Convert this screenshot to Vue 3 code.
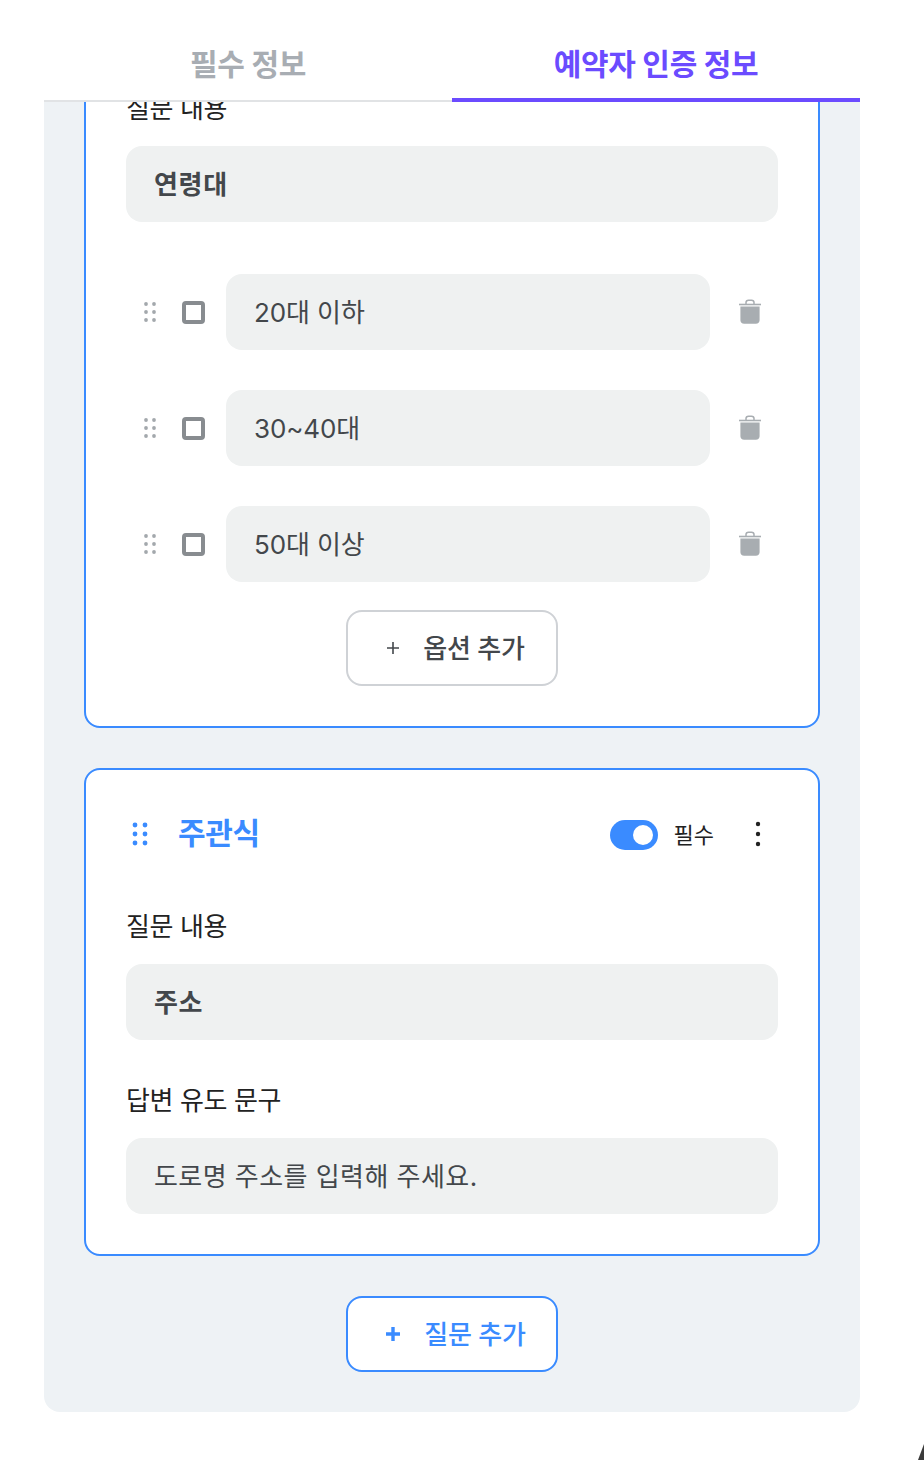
<script setup>
const options = ['20대 이하', '30~40대', '50대 이상']
const dots = [[3, 2], [11, 2], [3, 10], [11, 10], [3, 18], [11, 18]]
</script>

<template>
  <div class="page">
    <div class="shell">
      <nav class="tabs">
        <div class="tab">필수 정보</div>
        <div class="tab active">예약자 인증 정보</div>
      </nav>
      <main class="panel">
        <section class="card first">
          <div class="label">질문 내용</div>
          <div class="field strong">연령대</div>
          <div class="options">
            <div v-for="opt in options" :key="opt" class="option">
              <svg class="grip" width="14" height="20" viewBox="0 0 14 20">
                <circle v-for="(d, i) in dots" :key="i" :cx="d[0]" :cy="d[1]" r="1.9" fill="#a3a8ac" />
              </svg>
              <span class="check"></span>
              <div class="field opt">{{ opt }}</div>
              <svg class="trash" width="24" height="26" viewBox="0 0 24 26">
                <path d="M1 5.5h22" stroke="#a8adb1" stroke-width="1.6" fill="none" />
                <path d="M8 5V3.5C8 2 9 1.2 10.5 1.2h3C15 1.2 16 2 16 3.5V5" stroke="#a8adb1" stroke-width="1.5" fill="none" />
                <path d="M2.4 7.5h19.2V21c0 2.4-1.4 3.8-3.8 3.8H6.2c-2.4 0-3.8-1.4-3.8-3.8z" fill="#a8adb1" />
              </svg>
            </div>
          </div>
          <button class="add">
            <svg width="14" height="14" viewBox="0 0 14 14"><path d="M7 1v12M1 7h12" stroke="#43474b" stroke-width="1.6" /></svg>
            <span>옵션 추가</span>
          </button>
        </section>

        <section class="card">
          <header class="head">
            <svg class="grip-blue" width="16" height="24" viewBox="0 0 16 24">
              <circle cx="3" cy="3" r="2.4" fill="#3a8bff" />
              <circle cx="13" cy="3" r="2.4" fill="#3a8bff" />
              <circle cx="3" cy="12" r="2.4" fill="#3a8bff" />
              <circle cx="13" cy="12" r="2.4" fill="#3a8bff" />
              <circle cx="3" cy="21" r="2.4" fill="#3a8bff" />
              <circle cx="13" cy="21" r="2.4" fill="#3a8bff" />
            </svg>
            <h2 class="kind">주관식</h2>
            <span class="toggle"><i></i></span>
            <span class="req">필수</span>
            <svg class="more" width="6" height="26" viewBox="0 0 6 26">
              <circle cx="3" cy="3" r="2.2" fill="#222" />
              <circle cx="3" cy="13" r="2.2" fill="#222" />
              <circle cx="3" cy="23" r="2.2" fill="#222" />
            </svg>
          </header>
          <div class="label top">질문 내용</div>
          <div class="field strong">주소</div>
          <div class="label next">답변 유도 문구</div>
          <div class="field hint">도로명 주소를 입력해 주세요.</div>
        </section>

        <button class="add blue">
          <svg width="16" height="16" viewBox="0 0 16 16"><path d="M8 1v14M1 8h14" stroke="#3a8bff" stroke-width="3.4" /></svg>
          <span>질문 추가</span>
        </button>
      </main>
    </div>
    <svg class="cursor" width="6" height="16" viewBox="0 0 6 16"><path d="M6 0V16H0z" fill="#3a3a3a" /></svg>
  </div>
</template>

<style>
html, body { margin: 0; background: #fff; }
</style>

<style scoped>
.page {
  position: relative;
  width: 924px;
  height: 1460px;
  overflow: hidden;
  background: #fff;
  font-family: Inter, "Noto Sans CJK KR", sans-serif;
  color: #43474b;
}
.shell {
  width: 816px;
  margin-left: 44px;
  padding-top: 26px;
}
.tabs {
  display: flex;
  height: 76px;
  box-sizing: border-box;
  position: relative;
  z-index: 1;
  background: #fff;
  border-bottom: 2px solid #e1e3e5;
}
.tab {
  flex: 1;
  height: 76px;
  box-sizing: border-box;
  text-align: center;
  font-size: 30px;
  line-height: 76px;
  font-weight: 700;
  letter-spacing: -0.3px;
  color: #a8adb3;
}
.tab.active {
  color: #6b4bff;
  border-bottom: 4px solid #6b4bff;
}
.panel {
  display: flex;
  flex-direction: column;
  align-items: center;
  height: 1310px;
  box-sizing: border-box;
  padding: 0 40px 40px;
  overflow: hidden;
  background: #eef2f5;
  border-radius: 0 0 16px 16px;
}
.card {
  width: 100%;
  box-sizing: border-box;
  flex: none;
  padding: 40px;
  background: #fff;
  border: 2px solid #3a8bff;
  border-radius: 16px;
  margin-bottom: 40px;
}
.card.first {
  margin-top: -152px;
  padding-top: 138px;
}
.label {
  font-size: 26px;
  line-height: 38px;
  height: 36px;
  margin-bottom: 20px;
  color: #222;
  letter-spacing: -0.4px;
}
.label.top { margin-top: 50px; }
.label.next { margin-top: 42px; }
.field {
  height: 76px;
  box-sizing: border-box;
  padding: 0 28px;
  background: #eff1f1;
  border-radius: 16px;
  font-size: 26px;
  line-height: 78px;
  color: #43474b;
}
.strong { font-weight: 700; letter-spacing: 0.7px; }
.hint { letter-spacing: 0.45px; }
.options {
  display: flex;
  flex-direction: column;
  gap: 40px;
  margin-top: 52px;
}
.option {
  display: flex;
  align-items: center;
}
.grip { margin-left: 17px; flex: none; }
.check {
  flex: none;
  width: 23px;
  height: 23px;
  box-sizing: border-box;
  margin-left: 25px;
  border: 4px solid #888c90;
  border-radius: 4px;
}
.field.opt {
  flex: 1;
  margin-left: 21px;
  letter-spacing: -0.1px;
}
.trash { flex: none; margin-left: 28px; margin-right: 16px; }
.add {
  display: flex;
  align-items: center;
  justify-content: center;
  gap: 23px;
  width: 212px;
  height: 76px;
  flex: none;
  padding: 0 0 3px 7px;
  margin: 28px auto 0;
  background: #fff;
  border: 2px solid #cfd2d6;
  border-radius: 16px;
  font-family: inherit;
  font-size: 26px;
  font-weight: 500;
  letter-spacing: -0.2px;
  color: #43474b;
}
.add svg { margin-top: 3px; }
.add.blue {
  margin-top: 0;
  border-color: #3a8bff;
  color: #3a8bff;
}
.head {
  display: flex;
  align-items: center;
  height: 48px;
}
.grip-blue { margin-left: 6px; flex: none; }
.kind {
  margin: -2px 0 0 30px;
  font-size: 30px;
  line-height: 40px;
  font-weight: 700;
  letter-spacing: -0.3px;
  color: #3a8bff;
}
.toggle {
  display: block;
  width: 48px;
  height: 30px;
  margin: 2px 0 0 auto;
  position: relative;
  background: #3a8bff;
  border-radius: 15px;
}
.toggle i {
  position: absolute;
  top: 5px;
  right: 5px;
  width: 20px;
  height: 20px;
  background: #fff;
  border-radius: 50%;
}
.req {
  margin: -2px 0 0 16px;
  font-size: 22px;
  font-weight: 400;
  color: #222;
}
.more { margin-left: 41px; margin-right: 17px; flex: none; }
.cursor {
  position: absolute;
  right: 0;
  bottom: 0;
}
</style>
